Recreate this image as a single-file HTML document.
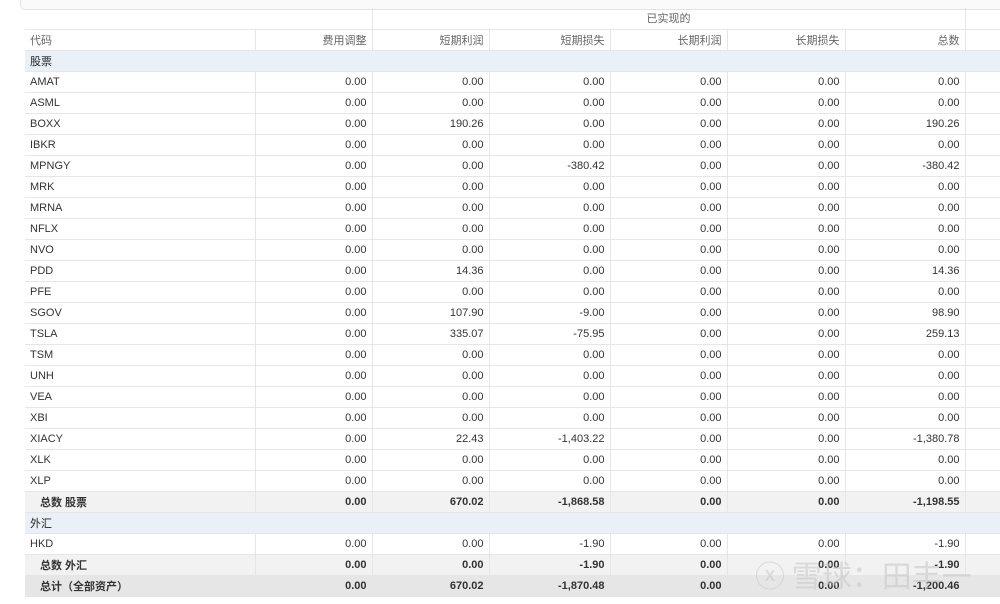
<!DOCTYPE html>
<html><head><meta charset="utf-8"><style>
body{margin:0;width:1000px;height:604px;overflow:hidden;background:#fff;font-family:"Liberation Sans","Noto Sans CJK SC",sans-serif;font-size:11px;color:#333}
.top{position:absolute;left:20px;top:-6px;width:990px;height:14px;border:1px solid #e3e3e3;border-radius:5px;background:#fafafa}
table{position:absolute;left:25px;top:8px;width:975px;border-collapse:collapse;table-layout:fixed}
td{height:21px;padding:0 5px;border:1px solid #e6e6e6;border-width:0 1px 1px 0;text-align:right;white-space:nowrap;overflow:hidden;box-sizing:border-box}
td:first-child{text-align:left}
.h td{color:#666}
.sec td{background:#eaf0f8;color:#222}
.tot td{background:#f2f2f2;font-weight:bold}
.tot td:first-child{padding-left:15px}
.gt td{background:#e6e6e6;font-weight:bold}
.gt td:first-child{padding-left:15px}
.wm{position:absolute;left:755px;top:552px;font-size:30px;color:rgba(200,200,200,.6);font-family:"Noto Sans CJK SC",sans-serif}
</style></head><body>
<div class="top"></div>
<table>
<colgroup><col style="width:230px"><col style="width:117px"><col style="width:117px"><col style="width:121px"><col style="width:117px"><col style="width:118px"><col style="width:120px"><col style="width:35px"></colgroup>
<tr class="h"><td colspan="2" style="border-bottom:1px solid #e6e6e6"></td><td colspan="5" style="text-align:center">已实现的</td><td></td></tr>
<tr class="h"><td>代码</td><td>费用调整</td><td>短期利润</td><td>短期损失</td><td>长期利润</td><td>长期损失</td><td>总数</td><td></td></tr>
<tr class="sec"><td colspan="8">股票</td></tr>
<tr><td>AMAT</td><td>0.00</td><td>0.00</td><td>0.00</td><td>0.00</td><td>0.00</td><td>0.00</td><td></td></tr>
<tr><td>ASML</td><td>0.00</td><td>0.00</td><td>0.00</td><td>0.00</td><td>0.00</td><td>0.00</td><td></td></tr>
<tr><td>BOXX</td><td>0.00</td><td>190.26</td><td>0.00</td><td>0.00</td><td>0.00</td><td>190.26</td><td></td></tr>
<tr><td>IBKR</td><td>0.00</td><td>0.00</td><td>0.00</td><td>0.00</td><td>0.00</td><td>0.00</td><td></td></tr>
<tr><td>MPNGY</td><td>0.00</td><td>0.00</td><td>-380.42</td><td>0.00</td><td>0.00</td><td>-380.42</td><td></td></tr>
<tr><td>MRK</td><td>0.00</td><td>0.00</td><td>0.00</td><td>0.00</td><td>0.00</td><td>0.00</td><td></td></tr>
<tr><td>MRNA</td><td>0.00</td><td>0.00</td><td>0.00</td><td>0.00</td><td>0.00</td><td>0.00</td><td></td></tr>
<tr><td>NFLX</td><td>0.00</td><td>0.00</td><td>0.00</td><td>0.00</td><td>0.00</td><td>0.00</td><td></td></tr>
<tr><td>NVO</td><td>0.00</td><td>0.00</td><td>0.00</td><td>0.00</td><td>0.00</td><td>0.00</td><td></td></tr>
<tr><td>PDD</td><td>0.00</td><td>14.36</td><td>0.00</td><td>0.00</td><td>0.00</td><td>14.36</td><td></td></tr>
<tr><td>PFE</td><td>0.00</td><td>0.00</td><td>0.00</td><td>0.00</td><td>0.00</td><td>0.00</td><td></td></tr>
<tr><td>SGOV</td><td>0.00</td><td>107.90</td><td>-9.00</td><td>0.00</td><td>0.00</td><td>98.90</td><td></td></tr>
<tr><td>TSLA</td><td>0.00</td><td>335.07</td><td>-75.95</td><td>0.00</td><td>0.00</td><td>259.13</td><td></td></tr>
<tr><td>TSM</td><td>0.00</td><td>0.00</td><td>0.00</td><td>0.00</td><td>0.00</td><td>0.00</td><td></td></tr>
<tr><td>UNH</td><td>0.00</td><td>0.00</td><td>0.00</td><td>0.00</td><td>0.00</td><td>0.00</td><td></td></tr>
<tr><td>VEA</td><td>0.00</td><td>0.00</td><td>0.00</td><td>0.00</td><td>0.00</td><td>0.00</td><td></td></tr>
<tr><td>XBI</td><td>0.00</td><td>0.00</td><td>0.00</td><td>0.00</td><td>0.00</td><td>0.00</td><td></td></tr>
<tr><td>XIACY</td><td>0.00</td><td>22.43</td><td>-1,403.22</td><td>0.00</td><td>0.00</td><td>-1,380.78</td><td></td></tr>
<tr><td>XLK</td><td>0.00</td><td>0.00</td><td>0.00</td><td>0.00</td><td>0.00</td><td>0.00</td><td></td></tr>
<tr><td>XLP</td><td>0.00</td><td>0.00</td><td>0.00</td><td>0.00</td><td>0.00</td><td>0.00</td><td></td></tr>
<tr class="tot"><td>总数 股票</td><td>0.00</td><td>670.02</td><td>-1,868.58</td><td>0.00</td><td>0.00</td><td>-1,198.55</td><td></td></tr>
<tr class="sec"><td colspan="8">外汇</td></tr>
<tr><td>HKD</td><td>0.00</td><td>0.00</td><td>-1.90</td><td>0.00</td><td>0.00</td><td>-1.90</td><td></td></tr>
<tr class="tot"><td>总数 外汇</td><td>0.00</td><td>0.00</td><td>-1.90</td><td>0.00</td><td>0.00</td><td>-1.90</td><td></td></tr>
<tr class="gt"><td>总计（全部资产）</td><td>0.00</td><td>670.02</td><td>-1,870.48</td><td>0.00</td><td>0.00</td><td>-1,200.46</td><td></td></tr>
</table>
<div class="wm">ⓧ 雪球：田丰一</div>
</body></html>
